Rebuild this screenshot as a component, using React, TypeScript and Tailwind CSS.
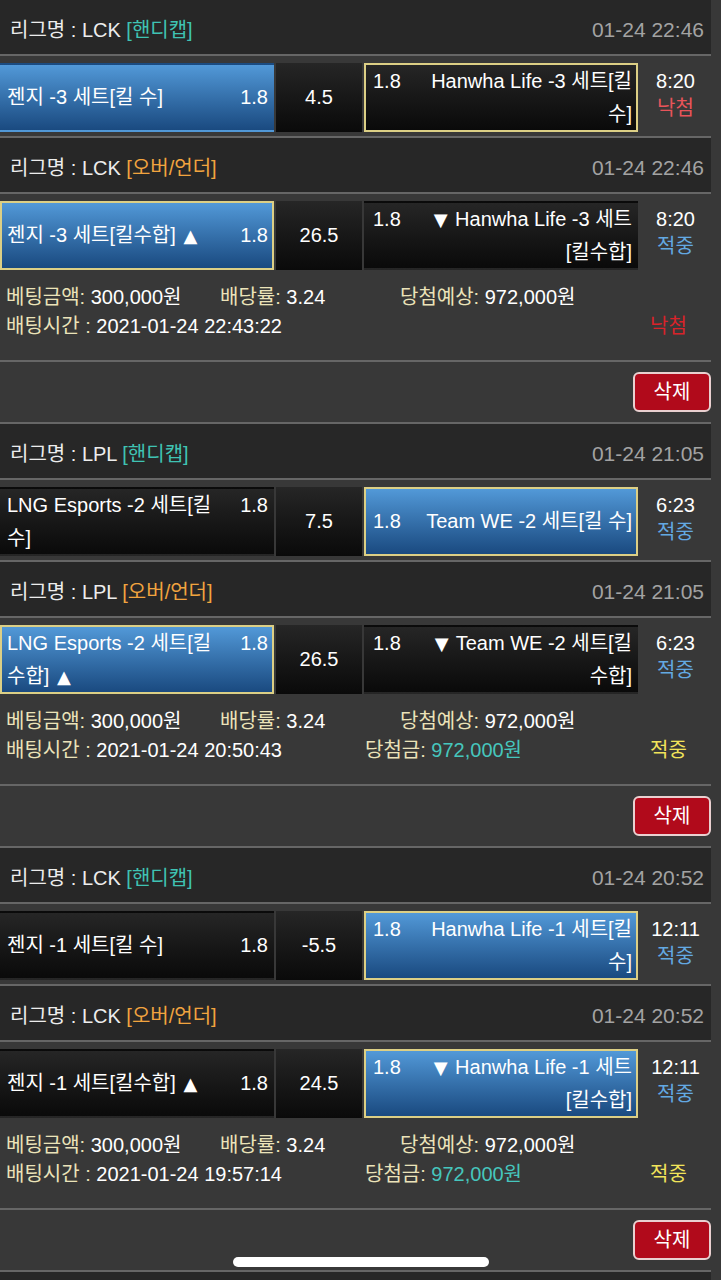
import React from "react";

type Side = "left" | "right";

interface Bet {
  league: string;
  type: "핸디캡" | "오버/언더";
  date: string;
  home: string;
  homeOdds: string;
  line: string;
  away: string;
  awayOdds: string;
  result: Side;
  pick: Side;
  clock: string;
  outcome: "적중" | "낙첨";
}

interface Slip {
  bets: Bet[];
  placedAt: string;
  payout?: string;
  status: "적중" | "낙첨";
}

const slips: Slip[] = [
  {
    bets: [
      {
        league: "LCK",
        type: "핸디캡",
        date: "01-24 22:46",
        home: "젠지 -3 세트[킬 수]",
        homeOdds: "1.8",
        line: "4.5",
        away: "Hanwha Life -3 세트[킬 수]",
        awayOdds: "1.8",
        result: "left",
        pick: "right",
        clock: "8:20",
        outcome: "낙첨",
      },
      {
        league: "LCK",
        type: "오버/언더",
        date: "01-24 22:46",
        home: "젠지 -3 세트[킬수합] ▲",
        homeOdds: "1.8",
        line: "26.5",
        away: "▼ Hanwha Life -3 세트[킬수합]",
        awayOdds: "1.8",
        result: "left",
        pick: "left",
        clock: "8:20",
        outcome: "적중",
      },
    ],
    placedAt: "2021-01-24 22:43:22",
    status: "낙첨",
  },
  {
    bets: [
      {
        league: "LPL",
        type: "핸디캡",
        date: "01-24 21:05",
        home: "LNG Esports -2 세트[킬 수]",
        homeOdds: "1.8",
        line: "7.5",
        away: "Team WE -2 세트[킬 수]",
        awayOdds: "1.8",
        result: "right",
        pick: "right",
        clock: "6:23",
        outcome: "적중",
      },
      {
        league: "LPL",
        type: "오버/언더",
        date: "01-24 21:05",
        home: "LNG Esports -2 세트[킬수합] ▲",
        homeOdds: "1.8",
        line: "26.5",
        away: "▼ Team WE -2 세트[킬수합]",
        awayOdds: "1.8",
        result: "left",
        pick: "left",
        clock: "6:23",
        outcome: "적중",
      },
    ],
    placedAt: "2021-01-24 20:50:43",
    payout: "972,000원",
    status: "적중",
  },
  {
    bets: [
      {
        league: "LCK",
        type: "핸디캡",
        date: "01-24 20:52",
        home: "젠지 -1 세트[킬 수]",
        homeOdds: "1.8",
        line: "-5.5",
        away: "Hanwha Life -1 세트[킬 수]",
        awayOdds: "1.8",
        result: "right",
        pick: "right",
        clock: "12:11",
        outcome: "적중",
      },
      {
        league: "LCK",
        type: "오버/언더",
        date: "01-24 20:52",
        home: "젠지 -1 세트[킬수합] ▲",
        homeOdds: "1.8",
        line: "24.5",
        away: "▼ Hanwha Life -1 세트[킬수합]",
        awayOdds: "1.8",
        result: "right",
        pick: "right",
        clock: "12:11",
        outcome: "적중",
      },
    ],
    placedAt: "2021-01-24 19:57:14",
    payout: "972,000원",
    status: "적중",
  },
];

const Divider = () => <div className="h-[2px] bg-[#666666]" />;

function cellClass(won: boolean, picked: boolean) {
  const bg = won
    ? "bg-gradient-to-b from-[#5299d8] to-[#1a4a80]"
    : "bg-gradient-to-b from-[#262626] to-[#0a0a0a]";
  const border = picked ? "border-[#dccf85]" : "border-transparent";
  return `${bg} border-2 ${border}`;
}

// the ▲ / ▼ markers come from DejaVu so they get the solid, wide shape
function TeamName({ text }: { text: string }) {
  const parts = text.split(/([▲▼])/);
  return (
    <>
      {parts.map((p, i) =>
        p === "▲" || p === "▼" ? (
          <span key={i} className="text-[18px] px-[2px] font-['DejaVu_Sans',sans-serif]">
            {p}
          </span>
        ) : (
          <React.Fragment key={i}>{p}</React.Fragment>
        )
      )}
    </>
  );
}

function LeagueHeader({ bet }: { bet?: Bet }) {
  return (
    <div className="h-[54px] bg-[#272727] flex items-center justify-between pl-[10px] pr-[7px] pt-[5px] text-[20px]">
      {bet && (
        <>
          <div className="text-[#ededed]">
            리그명 : {bet.league}{" "}
            <span className={bet.type === "핸디캡" ? "text-[#3fc3b3]" : "text-[#f1a43f]"}>
              [{bet.type}]
            </span>
          </div>
          <div className="text-[#a3a3a3] text-[21px]">{bet.date}</div>
        </>
      )}
    </div>
  );
}

function MatchRow({ bet }: { bet: Bet }) {
  return (
    <div className="flex h-[69px] gap-[2px] text-[20px] text-white leading-[33px]">
      <div
        className={`w-[274px] flex items-center pl-[5px] pr-[4px] ${cellClass(
          bet.result === "left",
          bet.pick === "left"
        )}`}
      >
        <div className="flex w-full items-start gap-[12px]">
          <div className="flex-1">
            <TeamName text={bet.home} />
          </div>
          <div>{bet.homeOdds}</div>
        </div>
      </div>
      <div className="w-[86px] flex items-center justify-center bg-gradient-to-b from-[#262626] to-[#0a0a0a]">
        {bet.line}
      </div>
      <div
        className={`w-[274px] flex items-center pl-[7px] pr-[4px] ${cellClass(
          bet.result === "right",
          bet.pick === "right"
        )}`}
      >
        <div className="flex w-full items-start gap-[14px]">
          <div>{bet.awayOdds}</div>
          <div className="flex-1 text-right">
            <TeamName text={bet.away} />
          </div>
        </div>
      </div>
      <div className="flex-1 flex flex-col items-center justify-center pb-[6px] leading-[27px]">
        <div>{bet.clock}</div>
        <div className={bet.outcome === "낙첨" ? "text-[#e8545a]" : "text-[#63a9e2]"}>
          {bet.outcome}
        </div>
      </div>
    </div>
  );
}

function SlipBlock({ slip, first }: { slip: Slip; first: boolean }) {
  const [a, b] = slip.bets;
  return (
    <div>
      {!first && <Divider />}
      <LeagueHeader bet={a} />
      <Divider />
      <div className="pt-[7px] pb-[4px]">
        <MatchRow bet={a} />
      </div>
      <Divider />
      <LeagueHeader bet={b} />
      <Divider />
      <div className="pt-[7px] h-[166px]">
        <MatchRow bet={b} />
        <div className="mt-[13px] pl-[6px] text-[20px] leading-[29px] text-white">
          <div className="flex">
            <div className="w-[214px]">
              <span className="text-[#ebe3b9]">베팅금액:</span> 300,000원
            </div>
            <div className="w-[180px]">
              <span className="text-[#ebe3b9]">배당률:</span> 3.24
            </div>
            <div>
              <span className="text-[#ebe3b9]">당첨예상:</span> 972,000원
            </div>
          </div>
          <div className="flex">
            <div className="w-[359px]">
              <span className="text-[#ebe3b9]">배팅시간 :</span> {slip.placedAt}
            </div>
            <div className="w-[285px]">
              {slip.payout && (
                <>
                  <span className="text-[#ebe3b9]">당첨금:</span>{" "}
                  <span className="text-[#46c6bd]">{slip.payout}</span>
                </>
              )}
            </div>
            <div className={slip.status === "낙첨" ? "text-[#d8232a]" : "text-[#f1e45a]"}>
              {slip.status}
            </div>
          </div>
        </div>
      </div>
      <Divider />
      <div className="h-[60px] flex items-start justify-end pt-[10px]">
        <button className="w-[78px] h-[40px] rounded-[6px] border-2 border-[#e9d0d0] bg-[#b10a1b] text-white text-[20px]">
          삭제
        </button>
      </div>
    </div>
  );
}

export default function App() {
  return (
    <div className="min-h-[1280px] bg-[#383838] font-['Liberation_Sans','Noto_Sans_CJK_KR',sans-serif] relative overflow-hidden">
      <div className="w-[711px]">
        {slips.map((slip, i) => (
          <SlipBlock key={i} slip={slip} first={i === 0} />
        ))}
        <Divider />
        <LeagueHeader />
      </div>
      <div className="fixed left-[233px] top-[1257px] w-[256px] h-[10px] rounded-full bg-white" />
    </div>
  );
}
